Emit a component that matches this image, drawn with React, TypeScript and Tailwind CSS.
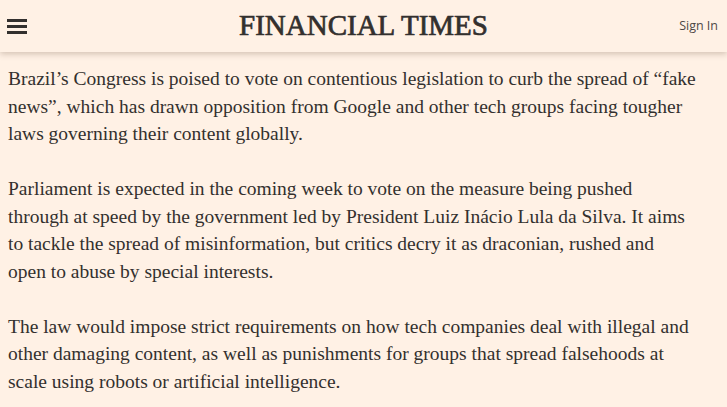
import React from 'react';

const paragraphs: string[][] = [
  [
    'Brazil\u2019s Congress is poised to vote on contentious legislation to curb the spread of \u201cfake',
    'news\u201d, which has drawn opposition from Google and other tech groups facing tougher',
    'laws governing their content globally.',
  ],
  [
    'Parliament is expected in the coming week to vote on the measure being pushed',
    'through at speed by the government led by President Luiz In\u00e1cio Lula da Silva. It aims',
    'to tackle the spread of misinformation, but critics decry it as draconian, rushed and',
    'open to abuse by special interests.',
  ],
  [
    'The law would impose strict requirements on how tech companies deal with illegal and',
    'other damaging content, as well as punishments for groups that spread falsehoods at',
    'scale using robots or artificial intelligence.',
  ],
];

function Header() {
  return (
    <header className="relative z-10 flex h-[52px] items-center justify-between bg-[#fff1e5] pl-[7px] pr-[9px] shadow-[0_2px_6px_rgba(80,50,30,0.25)]">
      <button className="flex w-[20px] flex-col gap-[3px]" aria-label="Menu">
        <span className="h-[3px] w-full bg-[#33302e]" />
        <span className="h-[3px] w-full bg-[#33302e]" />
        <span className="h-[3px] w-full bg-[#33302e]" />
      </button>
      <div className="absolute left-1/2 top-[5px] -translate-x-1/2 whitespace-nowrap font-['Liberation_Serif',serif] text-[29px] leading-[40px] text-[#33302e] [-webkit-text-stroke:0.7px_#33302e]">
        FINANCIAL TIMES
      </div>
      <a className="font-['Open_Sans',sans-serif] text-[12.5px] text-[#4d4845]">Sign In</a>
    </header>
  );
}

export default function App() {
  return (
    <div className="min-h-[407px] w-[727px] overflow-hidden bg-[#fff1e5]">
      <Header />
      <main className="flex flex-col gap-[27.5px] px-[8px] pt-[13px] font-['Liberation_Serif',serif] text-[19.5px] leading-[27.5px] text-[#33302e]">
        {paragraphs.map((lines, i) => (
          <p key={i}>
            {lines.map((line, j) => (
              <span key={j} className="block whitespace-nowrap">
                {line}
              </span>
            ))}
          </p>
        ))}
      </main>
    </div>
  );
}
